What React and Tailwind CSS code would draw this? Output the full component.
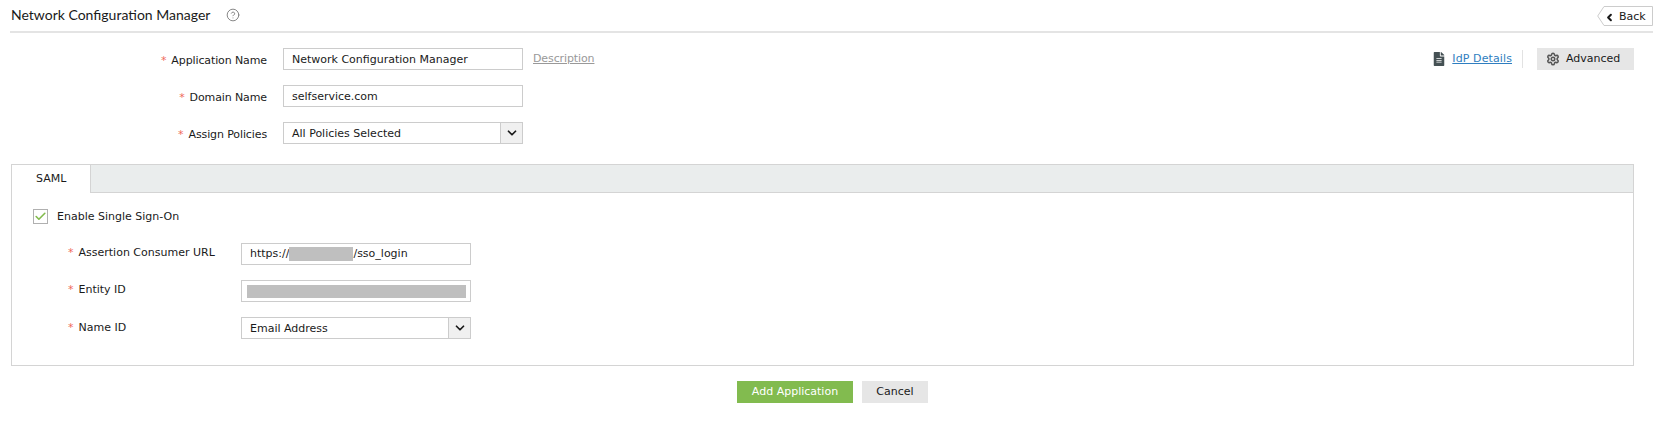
import React from "react";
import { ChevronDown, Check, Settings, CircleHelp, ChevronLeft } from "lucide-react";
import { FaFileAlt } from "react-icons/fa";

const font = "font-['DejaVu_Sans','Liberation_Sans',sans-serif]";

function Star() {
  return <span className="text-[#ef6a5a] mr-[5px]">*</span>;
}

function Field({ w = "w-[240px]", children, select, text = "pt-[2px]" }) {
  return (
    <div className={`${w} h-[22px] border border-[#cccccc] bg-white flex items-center text-[11px] text-[#1a1a1a] relative shrink-0`}>
      <div className={`flex-1 pl-[8px] ${text} flex items-center whitespace-nowrap overflow-hidden`}>{children}</div>
      {select && (
        <div className="w-[22px] h-full bg-[#f0f0f0] border-l border-[#cccccc] flex items-center justify-center">
          <ChevronDown size={14} strokeWidth={3} className="text-[#1a1a1a]" />
        </div>
      )}
    </div>
  );
}

function TopRow({ label, children, right, mb = "mb-[15px]" }) {
  return (
    <div className={`flex items-center h-[22px] ${mb}`}>
      <div className="w-[267px] pt-[4px] mr-[1px] text-right text-[11px] tracking-[-0.01em] text-[#1a1a1a] whitespace-nowrap shrink-0">
        <Star />
        {label}
      </div>
      <div className="ml-[15px] flex items-center flex-1">{children}</div>
      {right}
    </div>
  );
}

function SamlRow({ label, children, mb = "mb-[15px]", top = "pt-[2px]" }) {
  return (
    <div className={`flex items-center h-[22px] ${mb}`}>
      <div className={`w-[229px] pl-[56px] text-[11px] text-[#1a1a1a] whitespace-nowrap shrink-0 self-start ${top}`}>
        <Star />
        {label}
      </div>
      {children}
    </div>
  );
}

export default function App() {
  return (
    <div className={`${font} w-[1669px] h-[436px] bg-white overflow-hidden`}>
      <header className="ml-[10px] w-[1643px] h-[33px] border-b-2 border-[#e4e4e4] flex items-start justify-between">
        <div className="flex items-center pt-[5px] pl-[1px]">
          <h1 className="font-['Lato',sans-serif] text-[14px] leading-[20px] text-[#1a1a1a]">Network Configuration Manager</h1>
          <CircleHelp size={14} strokeWidth={1.5} className="ml-[16px] text-[#777777]" />
        </div>
        <button className="relative mt-[6px] w-[56px] h-[20px] flex items-center pl-[7px] text-[11px] text-[#1a1a1a]">
          <svg className="absolute inset-0" width="56" height="20" viewBox="0 0 56 20" fill="none">
            <polygon points="0.7,10 7,0.5 55.5,0.5 55.5,19.5 7,19.5" stroke="#cccccc" fill="#ffffff" />
          </svg>
          <span className="relative flex items-center pt-[2px]">
            <ChevronLeft size={11} strokeWidth={4.5} className="mr-[4px]" />
            Back
          </span>
        </button>
      </header>

      <section className="pt-[15px] w-[1634px]">
        <TopRow
          label="Application Name"
          right={
            <div className="flex items-center h-[22px]">
              <FaFileAlt size={14} className="text-[#455154]" />
              <a className="ml-[6px] text-[11px] tracking-[0.01em] text-[#2f7ec0] underline whitespace-nowrap">IdP Details</a>
              <div className="w-px h-[18px] bg-[#e2e2e2] mx-[10px]" />
              <button className="ml-[4px] w-[97px] h-[22px] bg-[#e6e6e6] flex items-center pl-[9px] text-[11px] text-[#1a1a1a]">
                <Settings size={14} strokeWidth={2.6} className="text-[#555555] mr-[6px]" />
                Advanced
              </button>
            </div>
          }
        >
          <Field>Network Configuration Manager</Field>
          <a className="ml-[10px] pt-[1px] text-[11px] tracking-[-0.01em] text-[#999999] underline">Description</a>
        </TopRow>
        <TopRow label="Domain Name">
          <Field>selfservice.com</Field>
        </TopRow>
        <TopRow label="Assign Policies" mb="mb-0">
          <Field select>All Policies Selected</Field>
        </TopRow>
      </section>

      <section className="mt-[20px] ml-[11px] w-[1623px] h-[202px] border border-[#d4d4d4]">
        <div className="h-[28px] bg-[#eaeded] border-b border-[#d4d4d4] flex">
          <div className="w-[79px] h-[28px] bg-white border-r border-[#d4d4d4] flex items-center pl-[24px] text-[11px] text-[#1a1a1a]">
            SAML
          </div>
        </div>
        <div className="pt-[15px]">
          <label className="flex items-center pl-[21px] h-[16px] mb-[19px] text-[11px] text-[#1a1a1a]">
            <span className="w-[15px] h-[15px] border border-[#b0b0b0] flex items-center justify-center mr-[9px]">
              <Check size={13} strokeWidth={3} className="text-[#82bb4c]" />
            </span>
            <span className="pt-[2px]">Enable Single Sign-On</span>
          </label>
          <SamlRow label="Assertion Consumer URL">
            <Field w="w-[230px]" text="">
              https://
              <span className="inline-block w-[64px] h-[14px] bg-[#bfbfbf]" />
              /sso_login
            </Field>
          </SamlRow>
          <SamlRow label="Entity ID">
            <div className="w-[230px] h-[22px] border border-[#cccccc] flex items-center justify-center shrink-0">
              <span className="w-[219px] h-[13px] bg-[#bfbfbf]" />
            </div>
          </SamlRow>
          <SamlRow label="Name ID" mb="mb-0" top="pt-[3px]">
            <Field w="w-[230px]" select>Email Address</Field>
          </SamlRow>
        </div>
      </section>

      <div className="mt-[15px] ml-[737px] flex gap-[9px]">
        <button className="w-[116px] h-[22px] bg-[#82bb4f] text-white text-[11px] flex items-center justify-center">Add Application</button>
        <button className="w-[66px] h-[22px] bg-[#e6e6e6] text-[#1a1a1a] text-[11px] flex items-center justify-center">Cancel</button>
      </div>
    </div>
  );
}
